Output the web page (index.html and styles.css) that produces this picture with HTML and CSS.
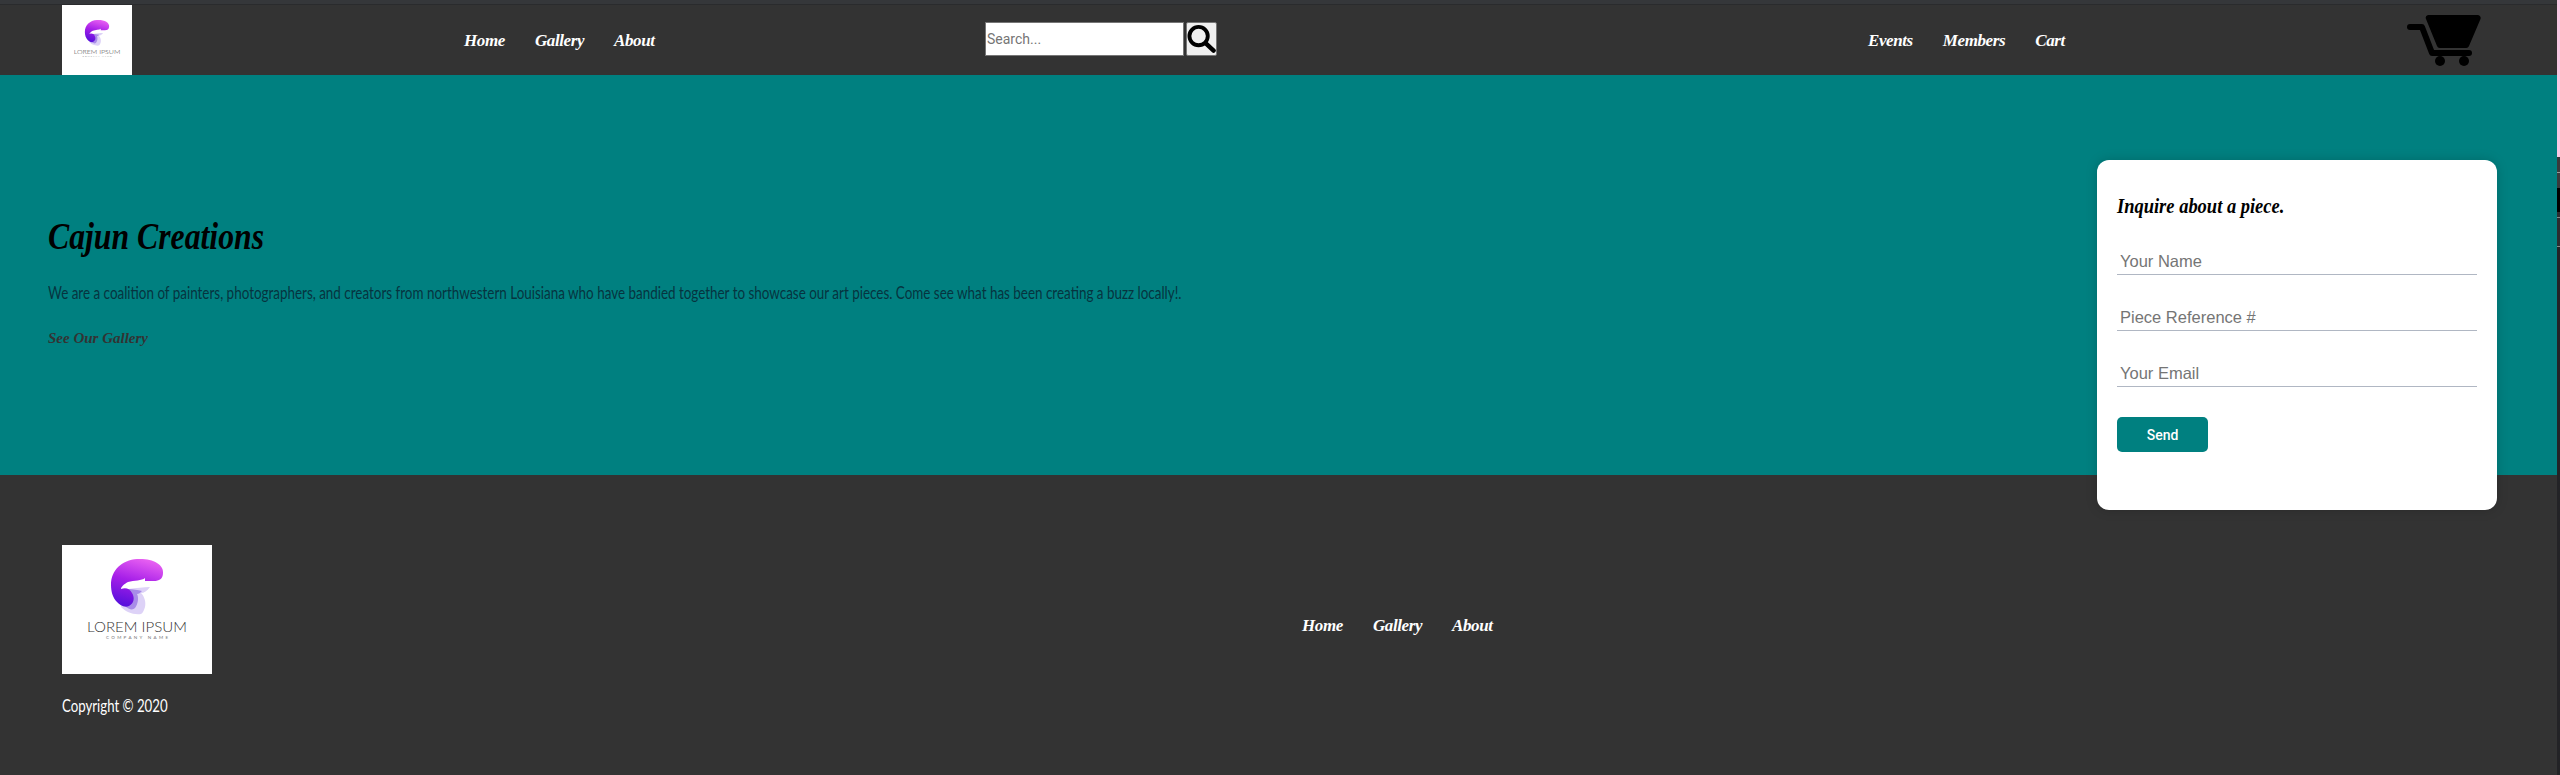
FILE: index.html
```html
<!DOCTYPE html>
<html lang="en">
<head>
<meta charset="utf-8">
<title>Cajun Creations</title>
<link rel="stylesheet" href="styles.css">
</head>
<body>
<div class="page">
  <div class="topline"></div>
  <header class="nav">
    <div class="logo logo-small">
      <svg viewBox="0 -18 150 150" width="70" height="70">
        <use href="#mark"/>
      </svg>
    </div>
    <nav class="links links-left"><a>Home</a><a>Gallery</a><a>About</a></nav>
    <form class="search">
      <input class="search-input" type="text" placeholder="Search...">
      <button class="search-btn" type="button" aria-label="Search">
        <svg viewBox="0 0 30 30" width="30" height="30"><circle cx="12" cy="12" r="9.500" fill="none" stroke="#000" stroke-width="4"/><path d="M19.500 19.500l8 7.500" stroke="#000" stroke-width="4.600" stroke-linecap="round"/></svg>
      </button>
    </form>
    <nav class="links links-right"><a>Events</a><a>Members</a><a>Cart</a></nav>
    <svg class="cart" viewBox="0 0 74 52" width="74" height="52" aria-label="Cart">
      <path d="M21 0H71a3 3 0 0 1 2.500 4L62 31a3 3 0 0 1-3 2H33a3 3 0 0 1-3-2L19 4a3 3 0 0 1 2-4z"/>
      <path d="M3 12H15L25 38H62" fill="none" stroke="#000" stroke-width="6" stroke-linecap="round" stroke-linejoin="round"/>
      <circle cx="33" cy="46" r="5"/><circle cx="57" cy="46" r="5"/>
    </svg>
  </header>
  <main class="hero">
    <section class="intro">
      <h1>Cajun Creations</h1>
      <p>We are a coalition of painters, photographers, and creators from northwestern Louisiana who have bandied together to showcase our art pieces. Come see what has been creating a buzz locally!.</p>
      <a class="cta">See Our Gallery</a>
    </section>
    <form class="card">
      <h2>Inquire about a piece.</h2>
      <input class="field" type="text" placeholder="Your Name">
      <input class="field" type="text" placeholder="Piece Reference #">
      <input class="field" type="text" placeholder="Your Email">
      <button class="send" type="button">Send</button>
    </form>
  </main>
  <footer class="footer">
    <div class="footer-brand">
      <div class="logo logo-large">
        <svg viewBox="0 0 150 129" width="150" height="129">
          <defs>
            <linearGradient id="g" x1="0.7" y1="0" x2="0.4" y2="1"><stop offset="0" stop-color="#ea62f2"/><stop offset="0.5" stop-color="#a61fe8"/><stop offset="1" stop-color="#5a10dc"/></linearGradient>
            <g id="mark">
              <path d="M66 44C74 43 82 42 88 42C85 46 82 48 79 48C83 52 84 58 83 62C82 65 81 68 79 69C71 70 64 67 59 62Z" fill="#ddd2f7"/>
              <path d="M66 44C71 44 76 45 80 46C78 48 77 49 75 49C77 53 76 59 73 63C71 65 68 65 64 62Z" fill="#a88ce8"/>
              <path d="M75 14C90 13 102 19 101 28C101 34 97 36 92 36H83V33C80 36 72 35 66 37C62 39 59 42 59 44C64 42 68 44 70 48C73 53 72 58 67 61C62 63 58 60 55 57C51 53 49 47 49 40C49 25 60 15 75 14Z" fill="url(#g)"/>
              <text x="25" y="87" class="logo-name" textLength="100" lengthAdjust="spacingAndGlyphs">LOREM IPSUM</text>
              <text x="44" y="94" class="logo-sub" textLength="62" lengthAdjust="spacing">COMPANY NAME</text>
            </g>
          </defs>
          <use href="#mark"/>
        </svg>
      </div>
      <p class="copy">Copyright © 2020</p>
    </div>
    <nav class="links links-footer"><a>Home</a><a>Gallery</a><a>About</a></nav>
  </footer>
</div>
<div class="edge"></div>
</body>
</html>
```

FILE: styles.css
```css
* { box-sizing: border-box; }
html, body { margin: 0; padding: 0; }
body {
  width: 2560px;
  height: 775px;
  overflow: hidden;
  background: #333;
  display: flex;
  font-family: "Lato", "Liberation Sans", sans-serif;
}
.page { width: 2557px; flex: none; }
.edge {
  width: 3px;
  flex: none;
  background: linear-gradient(#fbc8e4 0 157px, #3a3a3c 157px 172px, #999 172px 173px, #3a3a3c 173px 188px, #000 188px 212px, #2c2c30 212px 217px, #888 217px 218px, #2c2c30 218px 246px, #888 246px 247px, #232326 247px);
}
.topline { height: 5px; background: #35373a; border-bottom: 1px solid #2a2b2d; }
.nav {
  height: 70px;
  background: #333;
  display: flex;
  align-items: flex-start;
  padding-left: 62px;
}
.logo { background: #fff; flex: none; display: flex; }
.logo-small { width: 70px; height: 70px; }
.logo-large { width: 150px; height: 129px; }
.logo-name { font: 300 14px Lato, sans-serif; fill: #333; }
.logo-sub { font: 4.500px Lato, sans-serif; fill: #777; }
.links { display: flex; gap: 30px; }
.links a {
  color: #fff;
  font: italic bold 17px "Liberation Serif", serif;
  letter-spacing: -.4px;
  white-space: nowrap;
}
.links-left { margin: 26px 0 0 332px; width: 521px; }
.search { display: flex; margin-top: 17px; gap: 2px; }
.search-input {
  width: 199px;
  height: 34px;
  border: 1px solid #767676;
  background: #fff;
  padding: 0 1px;
  font: 14px Roboto, sans-serif;
  outline: 0;
}
.search-input::placeholder, .field::placeholder { color: #757575; opacity: 1; }
.search-btn {
  width: 31px;
  height: 34px;
  padding: 0;
  border: 1px solid #767676;
  border-radius: 2px;
  background: #efefef;
  display: flex;
  align-items: center;
  justify-content: center;
}
.links-right { margin: 26px 0 0 651px; width: 539px; }
.cart { margin-top: 10px; flex: none; }
.hero {
  height: 400px;
  background: #008080;
  display: flex;
  justify-content: space-between;
  padding: 85px 60px 0 48px;
}
.intro { padding-top: 53px; }
.intro h1 {
  margin: 0 0 24px;
  font: italic bold 38px/46px "Liberation Serif", serif;
  color: #000;
  transform: scaleX(.835);
  transform-origin: left;
  white-space: nowrap;
}
.intro p {
  margin: 0 0 25px;
  font-size: 17px;
  line-height: 20px;
  color: #06343f;
  white-space: nowrap;
  transform: scaleX(.79);
  transform-origin: left;
}
.cta {
  display: block;
  font: italic bold 15px/20px "Liberation Serif", serif;
  color: #333;
}
.card {
  width: 400px;
  height: 350px;
  flex: none;
  background: #fff;
  border-radius: 12px;
  padding: 31px 20px 0;
  box-shadow: 0 0 12px rgba(0, 0, 0, .18);
}
.card h2 {
  margin: 0 0 20px;
  font: italic bold 22px/30px "Liberation Serif", serif;
  color: #000;
  transform: scaleX(.84);
  transform-origin: left;
  white-space: nowrap;
}
.field {
  display: block;
  width: 360px;
  height: 34px;
  margin-bottom: 22px;
  border: 0;
  border-bottom: 1px solid #b0b7c3;
  padding: 7px 3px 0;
  font: 16.500px "Liberation Sans", Arial, sans-serif;
  background: #fff;
  outline: 0;
}
.send {
  display: block;
  width: 91px;
  height: 35px;
  margin-top: 30px;
  border: 0;
  border-radius: 5px;
  background: #008080;
  color: #fff;
  font: 500 14px Roboto, sans-serif;
}
.footer {
  height: 300px;
  background: #333;
  display: flex;
  padding: 70px 0 0 62px;
}
.footer-brand { width: 1240px; flex: none; }
.copy {
  margin: 20px 0 0;
  color: #fff;
  font-size: 18px;
  line-height: 22px;
  white-space: nowrap;
  transform: scaleX(.735);
  transform-origin: left;
}
.links-footer { margin-top: 71px; gap: 30px; }
```
